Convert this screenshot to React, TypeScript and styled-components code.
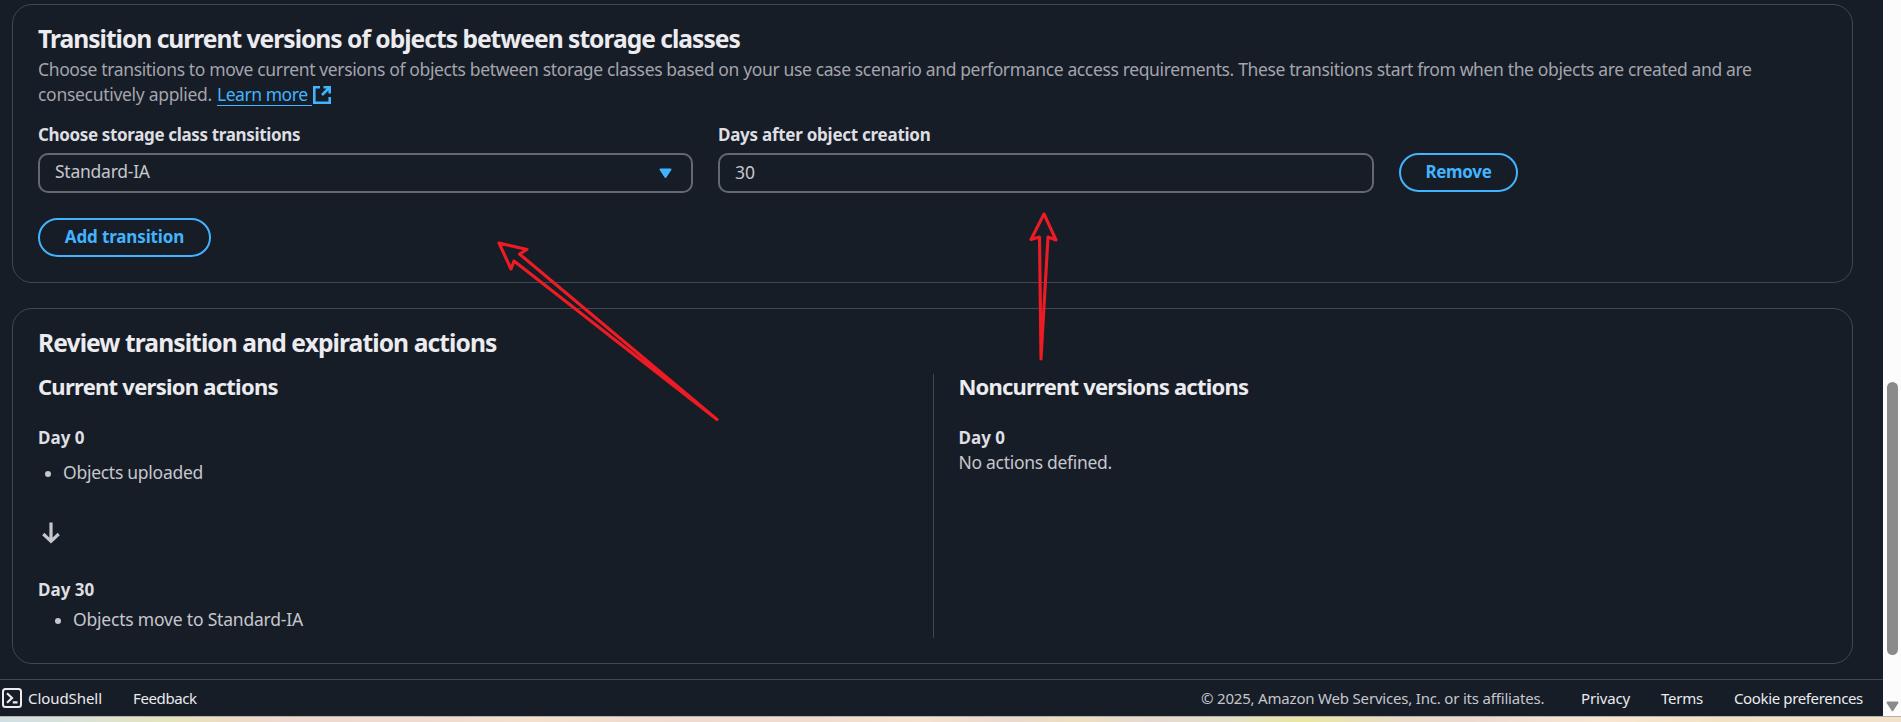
import React from 'react';
import styled, { createGlobalStyle } from 'styled-components';

const GlobalStyle = createGlobalStyle`
  * { box-sizing: border-box; }
  body {
    margin: 0;
    overflow: hidden;
    background: #161d26;
    font-family: "Noto Sans", "Open Sans", sans-serif;
    font-size: 17.5px;
    line-height: 25px;
    color: #c6c6cd;
  }
  h2, h3, h4, p, ul { margin: 0; padding: 0; }
`;

const Screen = styled.div`
  display: flex;
  flex-direction: column;
  width: 1901px;
  height: 722px;
  position: relative;
`;
const Browser = styled.div`
  display: flex;
  height: 716px;
`;
const Page = styled.div`
  display: flex;
  flex-direction: column;
  width: 1883px;
`;
const Content = styled.main`
  display: flex;
  flex-direction: column;
  gap: 25px;
  height: 679px;
  padding: 4px 30px 15px 12px;
`;
const Card = styled.section<{ $height: number }>`
  height: ${(p) => p.$height}px;
  border: 1px solid #424650;
  border-radius: 20px;
  padding: 19px 25px 0;
`;
const Heading = styled.h2<{ $ls: number }>`
  font-size: 24.6px;
  line-height: 30px;
  font-weight: 700;
  letter-spacing: ${(p) => p.$ls}px;
  color: #ebebf0;
  white-space: nowrap;
`;
const Tracked = styled.span<{ $ls: number }>`
  letter-spacing: ${(p) => p.$ls}px;
  white-space: nowrap;
`;
const Description = styled.p`
  margin-top: 3px;
  color: #a4a4ad;
`;
const DescriptionLine = styled.span`
  display: flex;
  height: 25px;
`;
const Link = styled.a`
  display: flex;
  margin-left: 5px;
  height: 24px;
  padding-right: 4px;
  border-bottom: 1px solid #42b4ff;
  color: #42b4ff;
`;
const ExternalIcon = styled.svg`
  width: 18px;
  height: 18px;
  margin: 4px 0 0 1px;
`;
const FormRow = styled.div`
  display: flex;
  align-items: flex-end;
  gap: 25px;
  margin-top: 15px;
`;
const Field = styled.div<{ $width: number }>`
  width: ${(p) => p.$width}px;
`;
const Label = styled.div`
  margin-bottom: 6px;
  font-size: 17px;
  font-weight: 700;
  color: #dedee3;
`;
const Control = styled.div<{ $drop?: boolean }>`
  display: flex;
  justify-content: space-between;
  height: 40px;
  padding: ${(p) => (p.$drop ? 5 : 4)}px 19px 0 15px;
  border: 2px solid #656871;
  border-radius: 10px;
`;
const Caret = styled.svg`
  width: 13px;
  height: 11px;
  margin-top: 9px;
`;
const PillButton = styled.button<{ $width: number; $ls: number }>`
  display: flex;
  justify-content: center;
  width: ${(p) => p.$width}px;
  height: 39px;
  padding: 4px 0 0;
  border: 2px solid #42b4ff;
  border-radius: 20px;
  background: transparent;
  color: #42b4ff;
  font: inherit;
  font-size: 17px;
  font-weight: 700;
  letter-spacing: ${(p) => p.$ls}px;
`;
const RemoveSlot = styled.div`
  padding-bottom: 1px;
`;
const AddSlot = styled.div`
  margin-top: 25px;
`;
const Columns = styled.div`
  display: flex;
  margin-top: 15px;
`;
const Column = styled.div<{ $divided?: boolean }>`
  width: 895px;
  height: 264px;
  ${(p) => p.$divided && 'border-left: 1px solid #424650; padding-left: 25px; margin-top: 1px; h3 { margin-top: -1px; }'}
`;
const SubHeading = styled.h3<{ $ls: number }>`
  font-size: 22px;
  line-height: 27px;
  font-weight: 700;
  letter-spacing: ${(p) => p.$ls}px;
  color: #ebebf0;
`;
const Day = styled.h4<{ $top: number }>`
  margin-top: ${(p) => p.$top}px;
  font-size: 17px;
  font-weight: 700;
  line-height: 25px;
  color: #dedee3;
`;
const Bullets = styled.ul<{ $top: number; $indent: number }>`
  margin-top: ${(p) => p.$top}px;
  padding-left: ${(p) => p.$indent}px;
  list-style: none;
`;
const Bullet = styled.li`
  display: flex;
  align-items: center;
  gap: 12px;
  &::before {
    content: '';
    width: 6px;
    height: 6px;
    margin-top: 2px;
    border-radius: 50%;
    background: #c6c6cd;
  }
`;
const DownIcon = styled.svg`
  display: block;
  width: 18px;
  height: 23px;
  margin: 37px 0 0 3.5px;
`;
const Footer = styled.footer`
  display: flex;
  align-items: flex-start;
  height: 37px;
  padding: 6px 19px 0 2px;
  border-top: 1px solid #424650;
  font-size: 15px;
  color: #ebebf0;
`;
const ShellIcon = styled.svg`
  width: 20px;
  height: 20px;
  margin: 2px 6px 0 0;
`;
const FooterItem = styled.span<{ $width: number; $ls: number; $muted?: boolean }>`
  width: ${(p) => p.$width}px;
  letter-spacing: ${(p) => p.$ls}px;
  white-space: nowrap;
  color: ${(p) => (p.$muted ? '#c6c6cd' : '#ebebf0')};
`;
const Spacer = styled.div`
  flex: 1;
`;
const Scrollbar = styled.div`
  display: flex;
  flex-direction: column;
  align-items: center;
  width: 18px;
  padding: 382px 0 0 3px;
  background: #fcfcfc;
`;
const Thumb = styled.div`
  width: 11px;
  height: 273px;
  margin-right: 3px;
  border-radius: 6px;
  background: #8b8b8b;
`;
const ScrollArrow = styled.svg`
  width: 13px;
  height: 11px;
  margin: 46px 3px 0 0;
`;
const Wallpaper = styled.div`
  height: 6px;
  border-top: 1px solid #b9b0a6;
  background: linear-gradient(90deg, #d0dfe6 0, #d8e2d8 75px, #e6e4bc 175px, #ecdcc4 225px, #eed9d2 290px, #eedad0 420px, #f4e0cd 530px, #eedad0 680px, #f0dccf 820px, #f4e1cf 920px, #ead9cf 1010px, #ecdfc0 1080px, #e6d9d2 1150px, #e4e0c8 1230px, #e8e6a2 1300px, #eadcc8 1400px, #ecdad2 1470px, #f8e6d3 1600px, #f2e2c4 1720px, #f2e2cc 1901px);
`;
const Annotations = styled.svg`
  position: absolute;
  left: 0;
  top: 0;
  width: 1901px;
  height: 716px;
  pointer-events: none;
`;

export default function App() {
  return (
    <Screen>
      <GlobalStyle />
      <Browser>
        <Page>
          <Content>
            <Card $height={279}>
              <Heading $ls={-1}>Transition current versions of objects between storage classes</Heading>
              <Description>
                <DescriptionLine>
                  <Tracked $ls={-0.363}>
                    Choose transitions to move current versions of objects between storage classes based on your use case
                    scenario and performance access requirements. These transitions start from when the objects are
                    created and are
                  </Tracked>
                </DescriptionLine>
                <DescriptionLine>
                  <Tracked $ls={-0.3}>consecutively applied.</Tracked>
                  <Link>
                    <Tracked $ls={-0.45}>Learn more</Tracked>
                  </Link>
                  <ExternalIcon viewBox="0 0 18 18" fill="none" stroke="#42b4ff" strokeWidth="2.6">
                    <path d="M7 1.3H1.3v15.4h15.4V11M10.5 1.3h6.2v6.2M16.5 1.5 9 9" />
                  </ExternalIcon>
                </DescriptionLine>
              </Description>
              <FormRow>
                <Field $width={655}>
                  <Label>
                    <Tracked $ls={-0.35}>Choose storage class transitions</Tracked>
                  </Label>
                  <Control>
                    <Tracked $ls={-0.25}>Standard-IA</Tracked>
                    <Caret viewBox="0 0 13 11">
                      <path d="M1.5 1.5h10L6.5 9z" fill="#42b4ff" stroke="#42b4ff" strokeWidth="2" strokeLinejoin="round" />
                    </Caret>
                  </Control>
                </Field>
                <Field $width={656}>
                  <Label>
                    <Tracked $ls={-0.26}>Days after object creation</Tracked>
                  </Label>
                  <Control $drop>30</Control>
                </Field>
                <RemoveSlot>
                  <PillButton $width={119} $ls={-0.33}>Remove</PillButton>
                </RemoveSlot>
              </FormRow>
              <AddSlot>
                <PillButton $width={173} $ls={-0.14}>Add transition</PillButton>
              </AddSlot>
            </Card>
            <Card $height={356}>
              <Heading $ls={-0.91}>Review transition and expiration actions</Heading>
              <Columns>
                <Column>
                  <SubHeading $ls={-0.75}>Current version actions</SubHeading>
                  <Day $top={25}>Day 0</Day>
                  <Bullets $top={10} $indent={7}>
                    <Bullet>
                      <Tracked $ls={-0.27}>Objects uploaded</Tracked>
                    </Bullet>
                  </Bullets>
                  <DownIcon viewBox="0 0 18 23" fill="none" stroke="#c6c6cd" strokeWidth="3.2">
                    <path d="M9 0.5V20M1.3 12 9 19.3 16.7 12" />
                  </DownIcon>
                  <Day $top={32}>Day 30</Day>
                  <Bullets $top={5} $indent={17}>
                    <Bullet>
                      <Tracked $ls={-0.2}>Objects move to Standard-IA</Tracked>
                    </Bullet>
                  </Bullets>
                </Column>
                <Column $divided>
                  <SubHeading $ls={-0.8}>Noncurrent versions actions</SubHeading>
                  <Day $top={25}>Day 0</Day>
                  <Tracked $ls={-0.3}>No actions defined.</Tracked>
                </Column>
              </Columns>
            </Card>
          </Content>
          <Footer>
            <ShellIcon viewBox="0 0 20 20" fill="none" stroke="#ebebf0" strokeWidth="2">
              <rect x="1" y="1" width="18" height="18" rx="2.5" />
              <path d="M5 5.3 10 10 5 14.7M10.8 14.4h4.7" strokeWidth="2.2" />
            </ShellIcon>
            <FooterItem $width={105} $ls={-0.07}>CloudShell</FooterItem>
            <FooterItem $width={70} $ls={-0.38}>Feedback</FooterItem>
            <Spacer />
            <FooterItem $width={380} $ls={-0.19} $muted>
              © 2025, Amazon Web Services, Inc. or its affiliates.
            </FooterItem>
            <FooterItem $width={80} $ls={-0.15}>Privacy</FooterItem>
            <FooterItem $width={73} $ls={-0.25}>Terms</FooterItem>
            <FooterItem $width={130} $ls={-0.37}>Cookie preferences</FooterItem>
          </Footer>
        </Page>
        <Scrollbar>
          <Thumb />
          <ScrollArrow viewBox="0 0 13 11">
            <path d="M1.5 1.5h10L6.5 9.3z" fill="#8b8b8b" stroke="#8b8b8b" strokeWidth="2" strokeLinejoin="round" />
          </ScrollArrow>
        </Scrollbar>
      </Browser>
      <Wallpaper />
      <Annotations viewBox="0 0 1901 716" fill="none" stroke="#ed1c24" strokeWidth="3.1" strokeLinejoin="round">
        <path d="M499 243 527 249.5 519.5 254 717 419.5 514 261 511 269Z" />
        <path d="M1044 214 1056 240 1048 237 1041 359 1039.5 237 1031 239.5Z" />
      </Annotations>
    </Screen>
  );
}
